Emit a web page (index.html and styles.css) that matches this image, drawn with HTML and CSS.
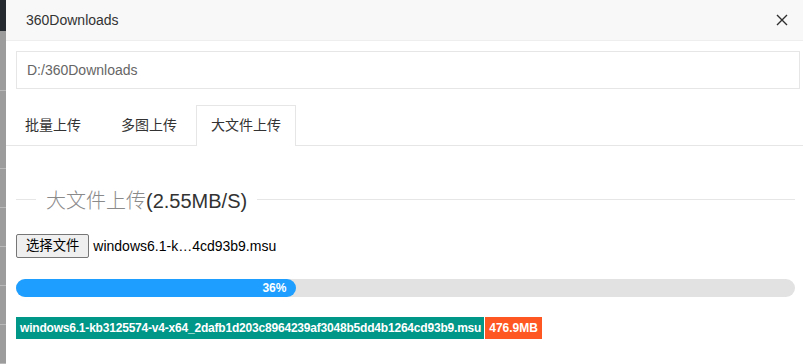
FILE: index.html
```html
<!DOCTYPE html>
<html lang="zh-CN">
<head>
<meta charset="utf-8">
<title>360Downloads</title>
<link rel="stylesheet" href="styles.css">
</head>
<body>
<div class="page">
  <div class="backdrop-strip">
    <div class="strip-top"></div>
    <div class="strip-row strip-row-a"></div>
    <div class="strip-row strip-row-b"></div>
    <div class="strip-row"></div>
    <div class="strip-row"></div>
    <div class="strip-row"></div>
    <div class="strip-row"></div>
    <div class="strip-row"></div>
  </div>
  <div class="modal">
    <div class="modal-header">
      <span class="modal-title">360Downloads</span>
      <span class="modal-close" aria-label="关闭">
        <svg width="12" height="12" viewBox="0 0 12 12"><path d="M1 1 L11 11 M11 1 L1 11" stroke="#2f2f2f" stroke-width="1.4" fill="none"/></svg>
      </span>
    </div>
    <div class="path-box">
      <div class="path-input">D:/360Downloads</div>
    </div>
    <ul class="tabs">
      <li class="tab tab-first">批量上传</li>
      <li class="tab">多图上传</li>
      <li class="tab tab-active">大文件上传</li>
    </ul>
    <div class="tab-content">
      <div class="legend-row">
        <span class="legend-text"><span class="legend-cjk">大文件上传</span>(2.55MB/S)</span>
      </div>
      <div class="file-row">
        <span class="file-btn">选择文件</span>
        <span class="file-name">windows6.1-k…4cd93b9.msu</span>
      </div>
      <div class="progress">
        <div class="progress-bar" style="width: 36%"><span class="progress-text">36%</span></div>
      </div>
      <div class="tag-row">
        <span class="tag tag-green">windows6.1-kb3125574-v4-x64_2dafb1d203c8964239af3048b5dd4b1264cd93b9.msu</span><span class="tag tag-orange">476.9MB</span>
      </div>
    </div>
  </div>
</div>
</body>
</html>
```
FILE: styles.css
```css
html, body {
  margin: 0;
  padding: 0;
  background: #ffffff;
  overflow: hidden;
}
body {
  font-family: "Liberation Sans", "Noto Sans CJK SC", sans-serif;
  font-size: 14px;
  color: #333333;
}
.page {
  display: flex;
  width: 803px;
  height: 364px;
  overflow: hidden;
}
.backdrop-strip {
  flex: none;
  width: 6px;
  display: flex;
  flex-direction: column;
  background: #9c9c9c;
}
.strip-top {
  height: 32px;
  background: #252930;
}
.strip-row {
  height: 39px;
  border-bottom: 1px solid #b9b9b9;
}
.strip-row-a {
  height: 60px;
}
.strip-row-b {
  height: 79px;
}
.modal {
  flex: none;
  width: 804px;
  background: #ffffff;
}
.modal-header {
  display: flex;
  align-items: center;
  height: 40px;
  padding: 0 22px 0 20px;
  background: #f8f8f8;
  border-bottom: 1px solid #eeeeee;
}
.modal-title {
  font-size: 14px;
  color: #333333;
}
.modal-close {
  margin-left: auto;
  display: flex;
}
.path-box {
  padding: 10px 10px 0;
}
.path-input {
  height: 36px;
  line-height: 36px;
  border: 1px solid #e6e6e6;
  padding-left: 10px;
  color: #666666;
  font-size: 14px;
}
.tabs {
  list-style: none;
  margin: 16px 0 0;
  padding: 0;
  display: flex;
  height: 40px;
  border-bottom: 1px solid #e6e6e6;
}
.tab {
  height: 40px;
  line-height: 40px;
  padding: 0 15px;
  margin-left: 4px;
  font-size: 14px;
  color: #333333;
  box-sizing: border-box;
}
.tab-first {
  margin-left: 4px;
  padding: 0 21px 0 15px;
}
.tab-active {
  height: 41px;
  border: 1px solid #e6e6e6;
  border-bottom: none;
  background: #ffffff;
  padding: 0 14px;
  line-height: 39px;
}
.tab-content {
  padding: 41px 15px 0 10px;
}
.legend-row {
  display: flex;
  align-items: center;
  height: 24px;
}
.legend-row::before {
  content: "";
  width: 20px;
  border-top: 1px solid #e6e6e6;
}
.legend-row::after {
  content: "";
  flex: 1;
  border-top: 1px solid #e6e6e6;
}
.legend-text {
  padding: 0 10px;
  font-size: 20px;
  color: #333333;
  white-space: nowrap;
}
.legend-cjk {
  color: #8a8a8a;
  font-weight: 300;
}
.file-row {
  display: flex;
  align-items: center;
  margin-top: 23px;
  height: 24px;
}
.file-btn {
  box-sizing: border-box;
  height: 24px;
  line-height: 22px;
  padding: 0 9px;
  border: 1px solid #767676;
  border-radius: 2px;
  background: #efefef;
  font-size: 13.33px;
  color: #000000;
}
.file-name {
  margin-left: 4px;
  font-size: 14px;
  color: #000000;
}
.progress {
  margin-top: 21px;
  height: 18px;
  border-radius: 20px;
  background: #e2e2e2;
}
.progress-bar {
  height: 18px;
  border-radius: 20px;
  background: #1e9fff;
  text-align: right;
  box-sizing: border-box;
  padding-right: 10px;
}
.progress-text {
  font-size: 12px;
  line-height: 18px;
  color: #ffffff;
  font-weight: bold;
}
.tag-row {
  display: flex;
  margin-top: 20px;
}
.tag {
  height: 22px;
  line-height: 22px;
  padding: 0 4px;
  font-size: 12px;
  font-weight: bold;
  letter-spacing: -0.2px;
  color: #ffffff;
  white-space: nowrap;
}
.tag-green {
  background: #009688;
  padding-right: 3px;
}
.tag-orange {
  background: #ff5722;
  margin-left: 1px;
  letter-spacing: 0;
}
```
